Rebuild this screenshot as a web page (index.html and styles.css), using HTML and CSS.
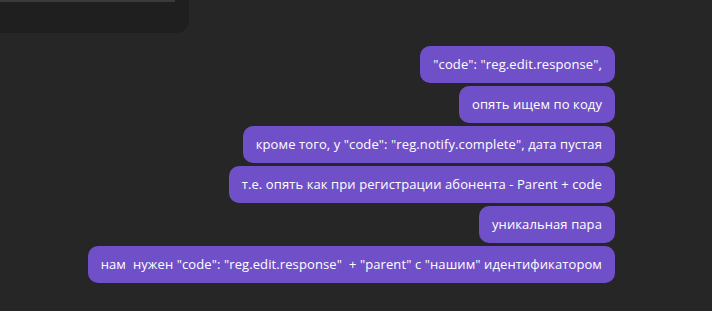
FILE: index.html
```html
<!DOCTYPE html>
<html>
<head>
<meta charset="utf-8">
<link rel="stylesheet" href="styles.css">
</head>
<body>
<div class="top-panel"><div class="top-line"></div></div>
<div class="messages">
  <div class="bubble">"code": "reg.edit.response",</div>
  <div class="bubble">опять ищем по коду</div>
  <div class="bubble">кроме того, у "code": "reg.notify.complete", дата пустая</div>
  <div class="bubble">т.е. опять как при регистрации абонента - Parent + code</div>
  <div class="bubble">уникальная пара</div>
  <div class="bubble">нам&nbsp; нужен "code": "reg.edit.response"&nbsp; + "parent" с "нашим" идентификатором</div>
</div>
</body>
</html>
```
FILE: styles.css
```css
html, body {
  margin: 0;
  padding: 0;
}
body {
  width: 712px;
  height: 311px;
  background: #262626;
  font-family: "Open Sans", "Noto Sans", sans-serif;
  overflow: hidden;
}
.top-panel {
  width: 189px;
  height: 33px;
  background: #1f1f1f;
  border-bottom-right-radius: 13px;
}
.top-line {
  width: 175px;
  height: 2px;
  background: #3a3a3a;
}
.messages {
  display: flex;
  flex-direction: column;
  align-items: flex-end;
  gap: 3px;
  padding: 13px 97px 0 0;
}
.bubble {
  background: #7050c8;
  color: #ffffff;
  font-size: 13px;
  line-height: 17px;
  letter-spacing: 0.1px;
  padding: 10px 13px;
  border-radius: 10px;
  white-space: nowrap;
}
```
